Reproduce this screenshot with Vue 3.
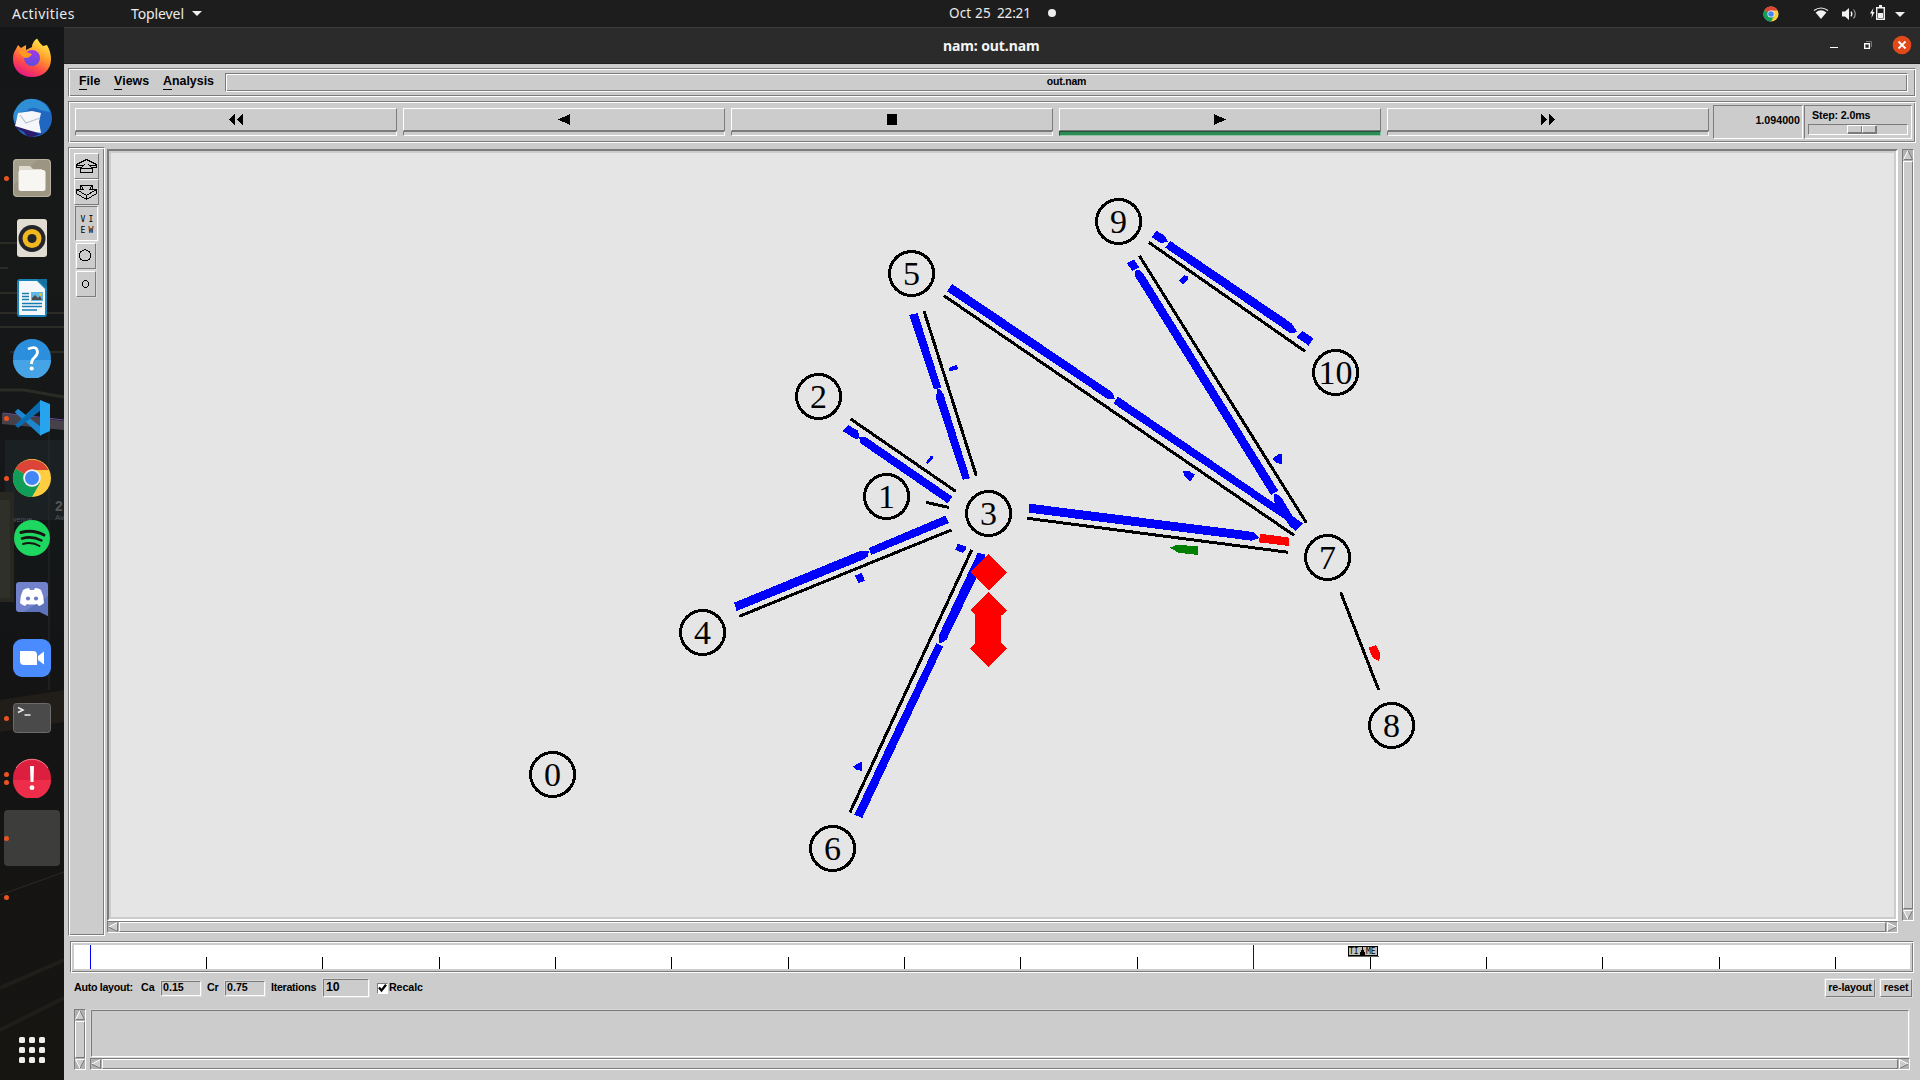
<script setup>
const dock = [
  { id: 'firefox', dots: 0 }, { id: 'thunderbird', dots: 0 }, { id: 'files', dots: 1 },
  { id: 'rhythmbox', dots: 0 }, { id: 'writer', dots: 0 }, { id: 'help', dots: 0 },
  { id: 'code', dots: 1 }, { id: 'chrome', dots: 1 }, { id: 'spotify', dots: 0 },
  { id: 'discord', dots: 0 }, { id: 'zoom', dots: 0 }, { id: 'terminal', dots: 1 },
  { id: 'error', dots: 2 }, { id: 'active', dots: 1 }, { id: 'blank', dots: 1 },
]

const transport = [
  { id: 'rewind', d: 'M0 5.5 6 0V11ZM8 5.5 14 0V11Z' },
  { id: 'back', d: 'M1 5.5 13 0V11Z' },
  { id: 'stop', d: 'M2 0H12V11H2Z' },
  { id: 'play', d: 'M1 0 13 5.5 1 11Z' },
  { id: 'forward', d: 'M0 0 6 5.5 0 11ZM8 0 14 5.5 8 11Z' },
]

const nodes = [
  [552, 774], [886, 496], [818, 396], [988, 513], [702, 632], [911, 273],
  [832, 848], [1327, 557], [1391, 725], [1118, 221], [1335, 372],
]

const links = [
  [924, 311, 976.3, 475.7], [850.7, 419, 955.7, 491.3], [926, 502.3, 949, 507.5],
  [739.3, 616.3, 951.3, 530], [971.7, 550, 850, 812.3], [1027.3, 518.3, 1288.3, 552.3],
  [944, 295.7, 1294, 535.3], [1139.3, 255.7, 1306.3, 522.7], [1148.7, 242.3, 1305, 351.3],
  [1340.7, 592.3, 1378.7, 690],
]

const packetGroups = [
  {
    x: 780, y: 180,
    items: [
      ['blue', '516,312 985,629 998,638 1004,657 983,657 501,334'],
      ['blue', '388,405 413,399 484,624 462,627'],
      ['blue', '471,628 480,628 490,641 570,895 548,899 468,655'],
      ['blue', '505,564 530,555 535,567 509,575'],
      ['blue', '188,753 204,735 234,752 239,774 228,778 210,767'],
      ['blue', '237,772 258,772 517,950 503,970 242,790'],
      ['blue', '436,850 452,828 459,829 457,838 443,851'],
    ],
  },
  {
    x: 1060, y: 180,
    items: [
      ['blue', '200,249 222,238 238,262 217,273'],
      ['blue', '225,272 237,270 250,281 655,932 633,945 226,290'],
      ['blue', '643,942 655,944 667,957 697,1007 728,1030 708,1053 690,1040 643,965'],
      ['blue', '160,670 174,650 700,1009 692,1030'],
      ['blue', '274,171 290,153 314,167 324,187 301,188'],
      ['blue', '316,203 331,183 695,430 712,457 690,459'],
      ['blue', '710,472 727,453 760,475 746,497'],
      ['blue', '384,290 372,285 357,302 369,315 383,300'],
      ['blue', '369,874 386,873 405,884 390,906 374,890'],
      ['blue', '637,836 655,823 666,822 666,852 652,850'],
      ['blue', '-93,971 580,1056 598,1074 575,1082 -93,998'],
      ['red', '600,1061 688,1073 686,1098 597,1087'],
      ['green', '330,1103 350,1094 414,1099 414,1125 354,1118'],
    ],
  },
  {
    x: 660, y: 480,
    items: [
      ['blue', '222,368 600,213 627,213 623,230 609,239 230,393'],
      ['blue', '626,204 856,107 867,129 634,225'],
      ['blue', '585,287 605,279 615,302 596,309'],
      ['blue', '953,219 975,222 975,240 859,480 841,490 837,489 836,467'],
      ['blue', '829,489 849,500 607,1014 583,1004'],
      ['blue', '886,209 893,191 917,199 918,208 908,219'],
      ['blue', '579,860 597,848 606,846 606,873 590,869'],
      ['red', '986,222 1041,277 986,332 931,277'],
      ['red', '986,336 1041,391 1023,408 1023,489 1041,505 986,561 931,505 945,489 945,405 931,391'],
    ],
  },
  { x: 1320, y: 570, items: [['red', '145,233 168,225 173,235 180,248 180,262 176,272 158,263']] },
]

const ticks = Array.from({ length: 16 }, (_, k) => ({
  x: Math.floor(16 + 116.37 * k), long: k === 0 || k === 10,
}))
</script>

<template>
  <div class="desktop">
    <header class="topbar">
      <span class="activities">Activities</span>
      <span class="appname">Toplevel</span>
      <svg class="caret" width="10" height="6"><path d="M0 0H10L5 5Z" fill="#eee" /></svg>
      <div class="clock"><span>Oct 25</span><span class="hm">22:21</span><i></i></div>
      <div class="tray">
        <svg class="t-chrome" width="16" height="16" viewBox="0 0 40 40">
          <circle cx="20" cy="20" r="19" fill="#ffcd40" />
          <path d="M20 20 3.5 10.5A19 19 0 0 0 20 39L28 25Z" fill="#109d58" />
          <path d="M20 20 3.5 10.5A19 19 0 0 1 36.5 11H20Z" fill="#db4437" />
          <circle cx="20" cy="20" r="9" fill="#f1f1f1" /><circle cx="20" cy="20" r="7" fill="#4285f4" />
        </svg>
        <svg class="t-wifi" width="16" height="13" viewBox="0 0 16 13">
          <path d="M1 3.6Q8-1.6 15 3.6" fill="none" stroke="#f2f2f2" stroke-width="1.2" />
          <path d="M2.6 5.4Q8 1 13.4 5.4L8 12Z" fill="#f2f2f2" />
        </svg>
        <svg class="t-vol" width="16" height="14" viewBox="0 0 16 14">
          <path d="M0 4.5H3L7 1V13L3 9.500H0Z" fill="#f2f2f2" />
          <path d="M9 4.700Q10.600 7 9 9.300" fill="none" stroke="#f2f2f2" stroke-width="1.400" />
          <path d="M11.500 2.500Q15 7 11.500 11.500" fill="none" stroke="#999" stroke-width="1.200" />
        </svg>
        <svg class="t-bat" width="16" height="16" viewBox="0 0 16 16">
          <path d="M3.500 3 0 8.500H2L1.500 13 4.500 7H2.600Z" fill="#f2f2f2" />
          <path d="M6.700 2.700H14.300V14.300H6.700Z" fill="none" stroke="#f2f2f2" stroke-width="1.400" />
          <path d="M9 0H12V2H9ZM8 8H13V13H8Z" fill="#f2f2f2" />
        </svg>
        <svg class="t-caret" width="10" height="6"><path d="M0 0H10L5 5Z" fill="#eee" /></svg>
      </div>
    </header>

    <div class="main">
      <aside class="dock">
        <svg class="wall" width="64" height="1053" viewBox="0 27 64 1053" fill="none">
          <g stroke="#33322a" stroke-width="1.500">
            <path d="M0 243H28M0 268H8M0 293H18M0 313H64M0 327H64M10 352H64" />
            <path d="M0 390H24L64 397" stroke="#2c2c27" stroke-width="3" />
            <path d="M0 895 64 872" stroke="#2b2a25" stroke-width="1" />
            <path d="M0 988 64 960M0 1030 64 998" stroke="#1f1e1a" stroke-width="4" />
          </g>
          <path d="M2 413 64 421V430L2 424Z" fill="#47424a" />
          <path d="M3 413 64 420" stroke="#6d4a9a" />
          <path d="M5 440H64V520H5Z" fill="#1b2022" />
          <path d="M0 492H14V602H0Z" fill="#292820" />
          <path d="M0 500H10V598H0Z" fill="#30302a" />
          <path d="M49 425V690" stroke="#262a2b" />
          <path d="M0 700 64 690V722L0 732Z" fill="#211e19" />
          <text x="55" y="511" fill="#555" font-size="14" font-weight="700" font-family="Liberation Sans, sans-serif">2</text>
          <text x="13" y="522" fill="#555" font-size="7" font-family="Liberation Sans, sans-serif">venue</text>
          <text x="55" y="520" fill="#555" font-size="8" font-family="Liberation Sans, sans-serif">Av</text>
        </svg>
        <div v-for="app in dock" :key="app.id" class="cell" :class="{ sel: app.id === 'active' }">
          <div class="dots"><i v-for="n in app.dots" :key="n"></i></div>
          <svg v-if="app.id === 'firefox'" width="40" height="40" viewBox="0 0 40 40">
            <defs>
              <linearGradient id="ff" x1=".8" y1="0" x2=".3" y2="1"><stop offset="0" stop-color="#fff44f" /><stop offset=".4" stop-color="#ffa02a" /><stop offset=".7" stop-color="#ff4a4a" /><stop offset="1" stop-color="#e31587" /></linearGradient>
              <linearGradient id="fp" x1="0" y1="0" x2="0" y2="1"><stop offset="0" stop-color="#a437e8" /><stop offset="1" stop-color="#5a4fe0" /></linearGradient>
            </defs>
            <path d="M20 9Q20 4 25 .5 28 6 31 8L35 7Q39 14 39 21C39 32 31 39 20 39S1 32 1 21Q1 15 4 11L6 7 9 10 14 7V12Z" fill="url(#ff)" />
            <circle cx="20" cy="20" r="8" fill="url(#fp)" />
            <path d="M7 14Q10 11 14 14L20 16Q18 20 13 20 9 18 7 14Z" fill="#ff9a1f" />
          </svg>
          <svg v-else-if="app.id === 'thunderbird'" width="40" height="40" viewBox="0 0 40 40">
            <circle cx="21" cy="20" r="19" fill="#1f67c1" />
            <path d="M3 12Q0 22 4 30L12 34Q14 39 20 39L32 35Q22 38 20 28Z" fill="#2b1d6b" />
            <path d="M2 14Q9 -1 22 1 35 4 38 14L28 12Q20 7 14 13L9 14Q5 18 3 26Q0 20 2 14Z" fill="#2f8fd6" />
            <path d="M6 15 20 13 29 15 27 24 29 35Q22 34 16 32L3 28Z" fill="#f6f7fb" />
            <path d="M8 17 14 25 28 20" stroke="#b7c0cd" stroke-width="1.200" fill="none" />
          </svg>
          <svg v-else-if="app.id === 'files'" width="40" height="40" viewBox="0 0 40 40">
            <rect x="1" y="1" width="38" height="38" rx="4" fill="#9c9582" /><path d="M5 1H26L1 28V5Q1 1 5 1Z" fill="#a59f8d" />
            <rect x="1.500" y="1.500" width="37" height="37" rx="4" fill="none" stroke="#b7b1a1" />
            <path d="M7 8H18L21 11H30V20H7Z" fill="#dedace" /><rect x="6.500" y="12" width="27" height="21" rx="2.500" fill="#f7f6f3" />
          </svg>
          <svg v-else-if="app.id === 'rhythmbox'" width="40" height="40" viewBox="0 0 40 40">
            <rect x="5" y="1" width="30" height="38" rx="3" fill="#e2ddd3" />
            <circle cx="20" cy="20.500" r="13.500" fill="#24252b" /><circle cx="20" cy="20.500" r="9.500" fill="#f2b91e" />
            <circle cx="20" cy="20.500" r="4.600" fill="#24252b" />
          </svg>
          <svg v-else-if="app.id === 'writer'" width="40" height="40" viewBox="0 0 40 40">
            <path d="M8 1H27L35 9V36Q35 39 32 39H8Q5 39 5 36V4Q5 1 8 1Z" fill="#1a84b8" />
            <path d="M8 3H25L33 11V37H8Q7 37 7 36V4Q7 3 8 3Z" fill="#f5f8fa" /><path d="M25 1H35V9L34 10Z" fill="#14719e" />
            <path d="M10 15.500H17M10 18.500H17M10 21.500H17M10 25.500H30M10 28.500H30M10 32H25" stroke="#187cae" stroke-width="1.400" />
            <rect x="19" y="14" width="12" height="9" fill="#62b8e5" /><path d="M20 22V20L23 17 26 20 28 18 30 22Z" fill="#4c4c4c" />
            <circle cx="28.500" cy="16.500" r="1.200" fill="#ffc400" />
          </svg>
          <svg v-else-if="app.id === 'help'" width="40" height="40" viewBox="0 0 40 40">
            <circle cx="20" cy="20" r="19" fill="#2b8fdd" /><path d="M1 22H39A19 19 0 0 1 1 22Z" fill="#45a3e6" />
            <path d="M16 11Q25 7 25.500 14 25.500 17 22 20 19.500 22 19.500 26" fill="none" stroke="#fff" stroke-width="2.800" />
            <circle cx="19.700" cy="30.500" r="2.100" fill="#fff" />
          </svg>
          <svg v-else-if="app.id === 'code'" width="40" height="40" viewBox="0 0 40 40">
            <path d="M3 14 6 11 29 29V38Z" fill="#1b87cf" /><path d="M3 27 6 30 29 12V2Z" fill="#0a6cb0" />
            <path d="M3 14 6 11 14 17.500 10 21Z" fill="#1b87cf" />
            <path d="M28 2 38 6V33L28 37.500Z" fill="#27a4f0" />
          </svg>
          <svg v-else-if="app.id === 'chrome'" width="40" height="40" viewBox="0 0 40 40">
            <circle cx="20" cy="20" r="19" fill="#ffcd40" />
            <path d="M20 20 3.500 10.500A19 19 0 0 0 20 39L28 25Z" fill="#109d58" />
            <path d="M20 20 3.500 10.500A19 19 0 0 1 36.500 12H20Z" fill="#db4437" />
            <circle cx="20" cy="20" r="8.800" fill="#f1f1f1" /><circle cx="20" cy="20" r="7" fill="#4285f4" />
          </svg>
          <svg v-else-if="app.id === 'spotify'" width="40" height="40" viewBox="0 0 40 40">
            <circle cx="20" cy="20" r="18" fill="#1ed760" />
            <g fill="none" stroke="#191414" stroke-linecap="round">
              <path d="M9 14.500Q21 11 32 17" stroke-width="3" /><path d="M10 20.500Q20 17.500 29.500 22.500" stroke-width="2.500" /><path d="M11 26Q20 23.500 27.500 28" stroke-width="2" />
            </g>
          </svg>
          <svg v-else-if="app.id === 'discord'" width="40" height="40" viewBox="0 0 40 40">
            <path d="M7 4H33Q36 4 36 7V38L28 34H7Q4 34 4 31V7Q4 4 7 4Z" fill="#7181cb" /><path d="M36 18V38L28 34H12Z" fill="#5c72ba" />
            <path d="M11 12Q14 10 17 10L18 12H22L23 10Q27 10 29 12 32 18 32 25 30 27 27 28L25 26Q20 27 15 26L13 28Q10 27 8 25 8 18 11 12Z" fill="#fff" />
            <circle cx="16" cy="20.500" r="2.100" fill="#6c7dc7" /><circle cx="24" cy="20.500" r="2.100" fill="#6c7dc7" />
          </svg>
          <svg v-else-if="app.id === 'zoom'" width="40" height="40" viewBox="0 0 40 40">
            <rect x="1" y="1" width="38" height="38" rx="9" fill="#4a8cff" />
            <path d="M8 13H21Q25 13 25 17V27H12Q8 27 8 23ZM26 18 32 13.500V26.500L26 22Z" fill="#fff" />
          </svg>
          <svg v-else-if="app.id === 'terminal'" width="40" height="40" viewBox="0 0 40 40">
            <rect x="1.500" y="5.500" width="37" height="29" rx="3" fill="#4a4a4a" stroke="#6b6b6b" />
            <path d="M6 9.500 11 12 6 14.500M12.500 17H18.500" stroke="#eee" stroke-width="1.500" fill="none" />
          </svg>
          <svg v-else-if="app.id === 'error'" width="40" height="40" viewBox="0 0 40 40">
            <circle cx="20" cy="20" r="19" fill="#dc1f3e" /><path d="M1 22H39A19 19 0 0 1 1 22Z" fill="#ee2d4b" />
            <path d="M4 10A19 19 0 0 1 36 10" fill="none" stroke="#ef7a8b" />
            <path d="M18 8H22L21.500 24H18.500Z" fill="#fff" /><circle cx="20" cy="29.700" r="2.400" fill="#fff" />
          </svg>
        </div>
        <svg class="grid" width="26" height="26" fill="#eeeeec">
          <template v-for="r in 3" :key="r"><rect v-for="c in 3" :key="c" :x="(c - 1) * 10" :y="(r - 1) * 10" width="6" height="6" rx="1.500" /></template>
        </svg>
      </aside>

      <section class="window">
        <div class="titlebar">
          <span class="title">nam: out.nam</span>
          <svg class="winbtns" width="90" height="20" viewBox="1826 35 90 20">
            <path d="M1830 47.500H1838" stroke="#fff" />
            <path d="M1866 41.500H1871.500V47" stroke="#777" fill="none" />
            <path d="M1864.700 43.700H1869.400V48.400H1864.700Z" stroke="#fff" stroke-width="1.400" fill="none" />
            <circle cx="1902" cy="45" r="9.300" fill="#e2491a" />
            <path d="M1898.500 41.500 1905.500 48.500M1905.500 41.500 1898.500 48.500" stroke="#fff" stroke-width="1.800" />
          </svg>
        </div>

        <div class="client">
          <div class="menubar groove">
            <span class="m-file"><u>F</u>ile</span><span class="m-views"><u>V</u>iews</span><span class="m-an"><u>A</u>nalysis</span>
            <div class="fname groove"><span>out.nam</span></div>
          </div>

          <div class="toolbar groove">
            <div v-for="b in transport" :key="b.id" class="tbtn" :class="b.id">
              <div class="face raised"><svg width="14" height="11" shape-rendering="crispEdges"><path :d="b.d" /></svg></div>
              <div class="led"></div>
            </div>
            <div class="time sunken">1.094000</div>
            <div class="step sunken">
              <span>Step: 2.0ms</span>
              <div class="trough sunken"><div class="thumb"><i class="raised"></i><i class="raised"></i></div></div>
            </div>
          </div>

          <div class="work">
            <div class="side groove">
              <div class="sbtn raised">
                <svg width="23" height="24" viewBox="75 154 23 24" shape-rendering="crispEdges">
                  <path d="M76.500 164.500 86.500 159.500 96.500 164.500V167.500H91.500L88.500 164.500M76.500 164.500V167.500H81.500L84.500 164.500M76.500 165H83M90 165H96.500M80.500 172.500V168.500H92.500V172.500ZM81.500 168 83.500 165M91.500 168 89.500 165" fill="none" stroke="#000" />
                </svg>
              </div>
              <div class="sbtn raised">
                <svg width="23" height="24" viewBox="75 180 23 24" shape-rendering="crispEdges">
                  <path d="M80.500 188.500V185.500H92.500V188.500M76.500 189.500H83.500L81.500 186.500M96.500 189.500H89.500L91.500 186.500M76.500 189.500V193.500L86.500 199.500 96.500 193.500V189.500L86.500 195.500ZM86.500 195.500V199.500" fill="none" stroke="#000" />
                </svg>
              </div>
              <div class="sview sunken"><span>V</span><span>I</span><span>E</span><span>W</span></div>
              <div class="scirc raised"><svg width="18" height="24" shape-rendering="crispEdges"><circle cx="8" cy="11.500" r="5.600" fill="none" stroke="#000" /></svg></div>
              <div class="scirc raised"><svg width="18" height="24" shape-rendering="crispEdges"><circle cx="8.500" cy="12" r="3.200" fill="none" stroke="#000" /></svg></div>
            </div>

            <div class="view">
              <div class="canvas">
                <svg width="1783" height="764" viewBox="111 153 1783 764">
                  <g shape-rendering="crispEdges">
                    <line v-for="(l, i) in links" :key="i" :x1="l[0]" :y1="l[1]" :x2="l[2]" :y2="l[3]" stroke="#000" stroke-width="3" />
                    <g v-for="g in packetGroups" :key="g.x" :transform="`translate(${g.x} ${g.y}) scale(.33333)`">
                      <polygon v-for="(p, i) in g.items" :key="i" :points="p[1]" :class="'pk-' + p[0]" />
                    </g>
                    <circle v-for="(n, i) in nodes" :key="i" :cx="n[0] + 0.600" :cy="n[1] + 0.500" r="22" fill="none" stroke="#000" stroke-width="3" />
                  </g>
                  <text v-for="(n, i) in nodes" :key="i" :x="n[0] + 0.600" :y="n[1] + 11.500" class="num">{{ i }}</text>
                </svg>
              </div>
              <div class="hsb">
                <svg width="10" height="10"><rect width="10" height="10" fill="#b1b1b1" /><path d="M1 5 9.500 .5V9.500Z" fill="#ccc" /><path d="M.5 5 9.500 .5" stroke="#fff" /><path d="M9.500 .5V9.500L.5 5" stroke="#7b7b7b" fill="none" /></svg>
                <div class="raised"></div>
                <svg width="10" height="10"><rect width="10" height="10" fill="#b1b1b1" /><path d="M.5 .5 9.500 5 .5 9.500Z" fill="#ccc" /><path d="M.5 9.500 9.500 5" stroke="#7b7b7b" /><path d="M.5 9.500V.5L9.500 5" stroke="#fff" fill="none" /></svg>
              </div>
            </div>

            <div class="vsb tall">
              <svg width="10" height="10"><rect width="10" height="10" fill="#b1b1b1" /><path d="M5 .5 9.500 9.500H.5Z" fill="#ccc" /><path d="M5 .5 9.500 9.500H.5" stroke="#7b7b7b" fill="none" /><path d="M.5 9.500 5 .5" stroke="#fff" /></svg>
              <div class="raised"></div>
              <svg width="10" height="10"><rect width="10" height="10" fill="#b1b1b1" /><path d="M.5 .5H9.500L5 9.500Z" fill="#ccc" /><path d="M9.500 .5 5 9.500" stroke="#7b7b7b" /><path d="M9.500 .5H.5L5 9.500" stroke="#fff" fill="none" /></svg>
            </div>
          </div>

          <div class="timeline groove">
            <svg width="1836" height="24" shape-rendering="crispEdges">
              <rect width="1836" height="24" fill="#fff" />
              <rect v-for="t in ticks" :key="t.x" :x="t.x" :y="t.long ? 0 : 12" width="1" :height="t.long ? 24 : 12" :fill="t.long ? '#00f' : '#000'" />
              <rect x="1274.500" y="1.500" width="29" height="9" fill="#bfc1b8" stroke="#000" />
              <rect x="1274" y="11" width="31" height="1" fill="#666" />
              <path d="M1288 1H1289V5H1290V7H1291V11H1286V7H1287V5H1288Z" />
            </svg>
            <span class="tm">TI</span><span class="tm me">ME</span>
          </div>

          <div class="controls">
            <span class="l-auto">Auto layout:</span>
            <span class="l-ca">Ca</span><div class="entry"><b class="sunken">0.15</b></div>
            <span class="l-cr">Cr</span><div class="entry"><b class="sunken">0.75</b></div>
            <span class="l-it">Iterations</span><div class="entry big"><b class="sunken">10</b></div>
            <div class="check sunken"><svg width="9" height="9"><path d="M1 3.500 3.500 6.500 8 .8" fill="none" stroke="#000" stroke-width="2.200" /></svg></div>
            <span class="l-re">Recalc</span>
            <div class="pbtn relayout"><b class="raised">re-layout</b></div>
            <div class="pbtn reset"><b class="raised">reset</b></div>
          </div>

          <div class="log">
            <div class="vsb">
              <svg width="10" height="10"><rect width="10" height="10" fill="#b1b1b1" /><path d="M5 .5 9.500 9.500H.5Z" fill="#ccc" /><path d="M5 .5 9.500 9.500H.5" stroke="#7b7b7b" fill="none" /><path d="M.5 9.500 5 .5" stroke="#fff" /></svg>
              <div class="raised"></div>
              <svg width="10" height="10"><rect width="10" height="10" fill="#b1b1b1" /><path d="M.5 .5H9.500L5 9.500Z" fill="#ccc" /><path d="M9.500 .5 5 9.500" stroke="#7b7b7b" /><path d="M9.500 .5H.5L5 9.500" stroke="#fff" fill="none" /></svg>
            </div>
            <div class="logcol">
              <div class="logbox"><div class="sunken"></div></div>
              <div class="hsb">
                <svg width="10" height="10"><rect width="10" height="10" fill="#b1b1b1" /><path d="M1 5 9.500 .5V9.500Z" fill="#ccc" /><path d="M.5 5 9.500 .5" stroke="#fff" /><path d="M9.500 .5V9.500L.5 5" stroke="#7b7b7b" fill="none" /></svg>
                <div class="raised"></div>
                <svg width="10" height="10"><rect width="10" height="10" fill="#b1b1b1" /><path d="M.5 .5 9.500 5 .5 9.500Z" fill="#ccc" /><path d="M.5 9.500 9.500 5" stroke="#7b7b7b" /><path d="M.5 9.500V.5L9.500 5" stroke="#fff" fill="none" /></svg>
              </div>
            </div>
          </div>
        </div>
      </section>
    </div>
  </div>
</template>

<style>
body { margin: 0; background: #ccc; overflow: hidden; }
</style>

<style scoped>
.desktop, .desktop * { box-sizing: border-box; }
.desktop { width: 1920px; height: 1080px; display: flex; flex-direction: column; overflow: hidden; }
svg { display: block; flex: none; }

.topbar { position: relative; height: 27px; flex: none; background: #1d1d1d; color: #ebebeb; display: flex; align-items: center; font: 14px/27px "Noto Sans", sans-serif; white-space: nowrap; }
.activities { width: 119px; padding-left: 12px; letter-spacing: .45px; }
.appname { box-sizing: content-box; width: 61px; padding-left: 12px; letter-spacing: -.1px; }
.caret { margin-top: 1px; }
.clock { position: absolute; left: 949px; top: 0; display: flex; align-items: center; font-size: 13.500px; }
.clock span { width: 47px; letter-spacing: .15px; }
.clock .hm { width: 52px; padding-left: 1px; letter-spacing: -.15px; }
.clock i { width: 8px; height: 8px; border-radius: 50%; background: #eee; margin-top: -1px; }
.tray { margin-left: auto; display: flex; align-items: center; padding-right: 15px; height: 26px; }
.t-wifi { margin-left: 34px; }
.t-vol { margin-left: 13px; }
.t-bat { margin-left: 12px; margin-top: -2px; }
.t-caret { margin-left: 9px; margin-top: 2px; }

.main { flex: 1; display: flex; min-height: 0; }
.dock { position: relative; width: 64px; flex: none; background: linear-gradient(#151617, #171818 20%, #141718 50%, #141415 60%, #161512); padding-top: 3px; }
.wall { position: absolute; left: 0; top: 0; }
.cell { position: relative; width: 56px; height: 56px; margin: 0 0 4px 4px; border-radius: 4px; display: flex; align-items: center; justify-content: center; }
.cell.sel { background: #3d3d3c; margin-top: 1px; margin-bottom: 3px; }
.dots { position: absolute; left: 0; top: 0; height: 56px; display: flex; flex-direction: column; justify-content: center; gap: 3px; }
.dots i { width: 5px; height: 5px; border-radius: 50%; background: #e95420; }
.grid { position: absolute; left: 19px; top: 1010px; }

.window { flex: 1; display: flex; flex-direction: column; min-width: 0; }
.titlebar { position: relative; height: 37px; background: #2b2b2b; border-top: 1px solid #3b3b3b; border-bottom: 1px solid #1f1f1f; display: flex; align-items: center; color: #f5f5f5; font: bold 14px/34px "Noto Sans", sans-serif; }
.title { margin-left: 879px; letter-spacing: -.1px; }
.winbtns { position: absolute; left: 1762px; top: 7px; }

.client { flex: 1; background: #ccc; color: #000; padding: 4px 4px 0 4px; font: bold 10.700px/12px "Liberation Sans", Arial, sans-serif; display: flex; flex-direction: column; white-space: nowrap; }
.groove { border: 1px solid; border-color: #7b7b7b #fff #fff #7b7b7b; box-shadow: inset 1px 1px #fff, inset -1px -1px #7b7b7b; }
.raised { border: 1px solid; border-color: #fff #7b7b7b #7b7b7b #fff; background: #ccc; }
.sunken { border: 1px solid; border-color: #7b7b7b #fff #fff #7b7b7b; background: #ccc; }

.menubar { height: 29px; flex: none; display: flex; font-size: 12.400px; line-height: 24px; padding-left: 10px; }
.menubar u { text-decoration: none; box-shadow: 0 1px #000; line-height: 15px; display: inline-block; }
.m-file { width: 35px; }
.m-views { width: 49px; }
.m-an { width: 62px; }
.fname { flex: 1; height: 19px; margin: 4px 7px 0 0; font-size: 10.500px; line-height: 14px; display: flex; justify-content: center; letter-spacing: -.2px; }

.toolbar { height: 42px; flex: none; margin-top: 4px; padding: 3px 3px 0 6px; display: flex; }
.tbtn { width: 322px; margin: 3px 6px 0 0; flex: none; }
.tbtn.forward { margin-right: 4px; }
.face { height: 23px; display: flex; align-items: center; justify-content: center; }
.led { height: 5px; border: 1px solid; border-color: #7b7b7b #fff #fff #7b7b7b; }
.play .led { background: #2e8b57; border-color: #1c5435 #8cc5a4 #8cc5a4 #1c5435; }
.time { width: 90px; height: 34px; line-height: 29px; text-align: right; padding-right: 2px; margin-right: 1px; }
.step { width: 108px; height: 34px; padding: 3px 3px 0; }
.step span { display: block; margin-left: 4px; letter-spacing: -.15px; }
.trough { height: 11px; margin-top: 3px; padding: 0 0 0 38px; }
.thumb { width: 30px; height: 9px; display: flex; border: 1px solid; border-color: #fff #7b7b7b #7b7b7b #fff; }
.thumb i { flex: 1; border-width: 0 1px 1px 0; }
.thumb i + i { border-left-width: 1px; }

.work { display: flex; margin-top: 4px; height: 789px; flex: none; }
.side { width: 37px; height: 789px; padding: 5px 0 0 5px; }
.sbtn { width: 25px; height: 26px; }
.sview { width: 23px; height: 35px; margin: 1px 0 2px 1px; box-shadow: 0 0 0 1px #d9d9d9; display: grid; grid-template-columns: 8px 8px; grid-template-rows: 11px 11px; padding: 7px 0 0 3px; font: 8px/11px "DejaVu Sans Mono", monospace; text-align: center; }
.scirc { width: 20px; height: 26px; margin: 0 0 2px 2px; box-shadow: 0 0 0 1px #d9d9d9; }
.view { width: 1791px; margin: 2px 4px 0 2px; }
.canvas { height: 772px; padding: 2px; border: 2px solid; border-color: #7b7b7b #fff #fff #7b7b7b; }
.canvas svg { background: #e5e5e5; }
.num { font: 34px "Liberation Serif", "Times New Roman", serif; text-anchor: middle; }
.pk-blue { fill: #00f; }
.pk-red { fill: #f00; }
.pk-green { fill: #008000; }
.hsb, .vsb { border: 1px solid; border-color: #7b7b7b #fff #fff #7b7b7b; display: flex; background: #b1b1b1; gap: 1px; flex: none; }
.hsb { height: 12px; }
.hsb .raised, .vsb .raised { flex: 1; }
.vsb { width: 12px; flex-direction: column; height: 61px; }
.vsb.tall { height: 772px; margin-top: 2px; }

.timeline { position: relative; height: 32px; flex: none; margin: 5px 2px 0; padding: 3px; }
.tm { position: absolute; left: 1278px; top: 5px; font: 8px/9px "DejaVu Sans Mono", monospace; }
.tm.me { left: 1295px; }

.controls { height: 36px; flex: none; display: flex; padding: 5px 3px 0 6px; line-height: 18px; }
.l-auto { width: 67px; letter-spacing: -.3px; }
.l-ca { width: 19px; }
.l-cr { width: 17px; letter-spacing: -.3px; }
.l-it { width: 51px; letter-spacing: -.3px; }
.l-re { letter-spacing: -.1px; margin-left: 1px; }
.entry { width: 42px; height: 17px; margin: 2px 5px 0 0; background: #d9d9d9; padding: 1px; }
.entry b { display: block; width: 40px; height: 15px; line-height: 11px; padding-left: 1px; }
.entry.big { width: 48px; height: 20px; margin: 0 7px 0 0; font-size: 12.300px; }
.entry.big b { width: 46px; height: 18px; line-height: 15px; padding-left: 2px; }
.check { width: 11px; height: 11px; margin-top: 5px; background: #fff; }
.pbtn { height: 20px; background: #d9d9d9; padding: 1px; letter-spacing: -.2px; }
.pbtn b { display: block; height: 18px; line-height: 15px; text-align: center; }
.relayout { width: 52px; margin-left: auto; margin-right: 3px; }
.reset { width: 34px; }

.log { display: flex; margin: 0 6px 0 6px; }
.logcol { margin-left: 4px; width: 1820px; }
.logbox { height: 49px; padding: 1px; background: #d9d9d9; }
.logbox .sunken { height: 47px; }
</style>
